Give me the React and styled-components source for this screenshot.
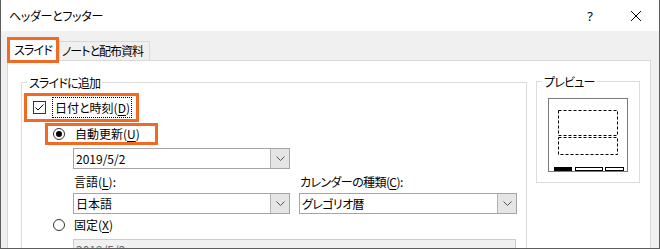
import React from 'react';
import styled, { createGlobalStyle, css } from 'styled-components';

const ORANGE = '#f26a21';

const GlobalStyle = createGlobalStyle`
  html, body { margin: 0; padding: 0; background: #ffffff; }
  body {
    font-family: "Noto Sans CJK JP", "Noto Sans", sans-serif;
    font-size: 12px;
    color: #000;
    font-feature-settings: "palt";
  }
  *, *::before, *::after { box-sizing: border-box; }
`;

const Dialog = styled.div`
  width: 660px;
  height: 249px;
  border: 1px solid #5e5e5e;
  border-top: none;
  background: #f0f0f0;
  display: flex;
  flex-direction: column;
  overflow: hidden;
`;

const TitleBar = styled.div`
  height: 31px;
  flex-shrink: 0;
  background: #fff;
  display: flex;
  align-items: center;
`;

const Title = styled.div`
  flex: 1;
  padding-left: 8px;
  line-height: 16px;
  letter-spacing: -0.3px;
`;

const CaptionButton = styled.div`
  width: 46px;
  height: 31px;
  display: flex;
  align-items: center;
  justify-content: center;
  font-family: "Noto Sans", sans-serif;
  font-size: 13px;
`;

const Body = styled.div`
  flex: 1;
  min-height: 0;
  display: flex;
  flex-direction: column;
  padding: 6px 8px 0 6px;
`;

const TabStrip = styled.div`
  display: flex;
  align-items: flex-end;
  height: 23px;
  flex-shrink: 0;
  position: relative;
  z-index: 1;
`;

const Tab = styled.div`
  display: flex;
  align-items: center;
  line-height: 16px;
  white-space: nowrap;
  ${p => p.$active ? css`
    width: 52px;
    height: 26px;
    margin-bottom: -3px;
    border: 3px solid ${ORANGE};
    background: #fff;
    padding-left: 4px;
    letter-spacing: -0.8px;
  ` : css`
    height: 19px;
    border: 1px solid #d9d9d9;
    border-bottom: none;
    background: #f0f0f0;
    padding: 0 6px 0 2px;
    letter-spacing: -1px;
  `}
`;

const Panel = styled.div`
  flex: 1;
  min-height: 0;
  background: #fff;
  border: 1px solid #d9d9d9;
  border-bottom: none;
  display: flex;
  align-items: flex-start;
  gap: 9px;
  padding: 13px 10px 0 13px;
`;

const Group = styled.fieldset`
  margin: ${p => p.$mt || 0}px 0 0 0;
  padding: 0;
  border: 1px solid #dcdcdc;
  min-width: 0;
  width: ${p => p.$w}px;
  flex-shrink: 0;
`;

const Legend = styled.legend`
  margin-left: 5px;
  padding: 0 2px;
  line-height: 17px;
  font-size: 12px;
  letter-spacing: -0.8px;
`;

const GroupBody = styled.div`
  display: flex;
  flex-direction: column;
  align-items: flex-start;
  padding: 1px 0 20px 1px;
`;

const Highlight = styled.div`
  display: flex;
  align-items: center;
  border: 3px solid ${ORANGE};
  height: ${p => p.$h}px;
  margin-left: ${p => p.$ml}px;
  margin-top: 1px;
  padding: 0 ${p => p.$pr}px 0 ${p => p.$pl}px;
  gap: ${p => p.$gap}px;
  line-height: 16px;
  white-space: nowrap;
`;

const CheckBox = styled.span`
  width: 13px;
  height: 13px;
  border: 1px solid #333;
  background: #fff;
  display: flex;
  align-items: center;
  justify-content: center;
  flex-shrink: 0;
`;

const Radio = styled.span`
  width: 12px;
  height: 12px;
  border-radius: 50%;
  border: 1px solid #333;
  background: #fff;
  display: flex;
  align-items: center;
  justify-content: center;
  flex-shrink: 0;
  &::after {
    content: "";
    width: 6px;
    height: 6px;
    border-radius: 50%;
    background: ${p => (p.$checked ? '#000' : 'transparent')};
  }
`;

const FocusLabel = styled.span`
  height: 21px;
  display: flex;
  align-items: center;
  border: 1px dotted #000;
  padding: 0 1px 0 2px;
`;

const Key = styled.u`
  text-decoration: underline;
  text-underline-offset: 2px;
`;

const OptionRow = styled.div`
  display: flex;
  align-items: center;
  height: 20px;
  gap: 9px;
  margin-left: ${p => p.$ml}px;
  margin-top: ${p => p.$mt}px;
  line-height: 16px;
`;

const Combo = styled.div`
  width: ${p => p.$w}px;
  height: 21px;
  border: 1px solid #a5a5a5;
  background: #fff;
  display: flex;
  align-items: stretch;
  margin-left: ${p => p.$ml || 0}px;
  margin-top: ${p => p.$mt || 0}px;
  flex-shrink: 0;
`;

const ComboText = styled.span`
  flex: 1;
  padding-left: 2px;
  line-height: 19px;
  white-space: nowrap;
  letter-spacing: ${p => p.$ls || 0}px;
`;

const DropButton = styled.span`
  width: 19px;
  background: #e5e5e5;
  border-left: 1px solid #b4b4b4;
  display: flex;
  align-items: center;
  justify-content: center;
`;

const FieldRow = styled.div`
  display: flex;
  gap: 9px;
  margin-left: 50px;
  margin-top: 5px;
`;

const Field = styled.div`
  display: flex;
  flex-direction: column;
  width: ${p => p.$w}px;
`;

const FieldLabel = styled.div`
  line-height: 16px;
  padding-left: 1px;
  margin-bottom: 3px;
  white-space: nowrap;
  letter-spacing: ${p => p.$ls || 0}px;
`;

const DisabledBox = styled.div`
  width: 443px;
  height: 21px;
  margin-left: 50px;
  margin-top: 4px;
  border: 1px solid #cccccc;
  background: #f0f0f0;
  color: #6d6d6d;
  padding-left: 2px;
  line-height: 19px;
`;

const PreviewBody = styled.div`
  padding: 8px 0 10px 11px;
  display: flex;
`;

const Chevron = () => (
  <svg width="9" height="5" viewBox="0 0 9 5">
    <polyline points="0.5,0.5 4.5,4.5 8.5,0.5" fill="none" stroke="#555" strokeWidth="1" />
  </svg>
);

const Check = () => (
  <svg width="11" height="11" viewBox="0 0 11 11">
    <polyline points="1.5,5.5 4,8 9.5,2.5" fill="none" stroke="#000" strokeWidth="1" />
  </svg>
);

const CloseIcon = () => (
  <svg width="10" height="10" viewBox="0 0 10 10">
    <line x1="0" y1="0" x2="10" y2="10" stroke="#000" strokeWidth="1" />
    <line x1="10" y1="0" x2="0" y2="10" stroke="#000" strokeWidth="1" />
  </svg>
);

const PreviewPicture = () => (
  <svg width="80" height="74" viewBox="0 0 80 74">
    <rect x="0.5" y="0.5" width="79" height="73" fill="#fff" stroke="#7a7a7a" />
    <rect x="10.5" y="12.5" width="59" height="25" fill="none" stroke="#000" strokeDasharray="3 2" />
    <rect x="10.5" y="39.5" width="59" height="17" fill="none" stroke="#000" strokeDasharray="3 2" />
    <rect x="6" y="69" width="18" height="4" fill="#000" />
    <rect x="27.5" y="69.5" width="27" height="3" fill="#fff" stroke="#000" />
    <rect x="57.5" y="69.5" width="18" height="3" fill="#fff" stroke="#000" />
  </svg>
);

export default function App() {
  return (
    <>
      <GlobalStyle />
      <Dialog>
        <TitleBar>
          <Title>ヘッダーとフッター</Title>
          <CaptionButton>?</CaptionButton>
          <CaptionButton><CloseIcon /></CaptionButton>
        </TitleBar>
        <Body>
          <TabStrip>
            <Tab $active>スライド</Tab>
            <Tab>ノートと配布資料</Tab>
          </TabStrip>
          <Panel>
            <Group $w={506}>
              <Legend>スライドに追加</Legend>
              <GroupBody>
                <Highlight $h={29} $ml={1} $pl={6} $pr={4} $gap={6}>
                  <CheckBox><Check /></CheckBox>
                  <FocusLabel>日付と時刻(<Key>D</Key>)</FocusLabel>
                </Highlight>
                <Highlight $h={22} $ml={22} $pl={5} $pr={15} $gap={10}>
                  <Radio $checked />
                  <span>自動更新(<Key>U</Key>)</span>
                </Highlight>
                <Combo $w={217} $ml={50} $mt={3}>
                  <ComboText>2019/5/2</ComboText>
                  <DropButton><Chevron /></DropButton>
                </Combo>
                <FieldRow>
                  <Field $w={217}>
                    <FieldLabel>言語(<Key>L</Key>):</FieldLabel>
                    <Combo $w={217}>
                      <ComboText>日本語</ComboText>
                      <DropButton><Chevron /></DropButton>
                    </Combo>
                  </Field>
                  <Field $w={218}>
                    <FieldLabel $ls={-0.6}>カレンダーの種類(<Key>C</Key>):</FieldLabel>
                    <Combo $w={218}>
                      <ComboText $ls={-0.6}>グレゴリオ暦</ComboText>
                      <DropButton><Chevron /></DropButton>
                    </Combo>
                  </Field>
                </FieldRow>
                <OptionRow $ml={30} $mt={1}>
                  <Radio />
                  <span>固定(<Key>X</Key>)</span>
                </OptionRow>
                <DisabledBox>2019/5/2</DisabledBox>
              </GroupBody>
            </Group>
            <Group $w={104} $mt={-1}>
              <Legend>プレビュー</Legend>
              <PreviewBody>
                <PreviewPicture />
              </PreviewBody>
            </Group>
          </Panel>
        </Body>
      </Dialog>
    </>
  );
}
